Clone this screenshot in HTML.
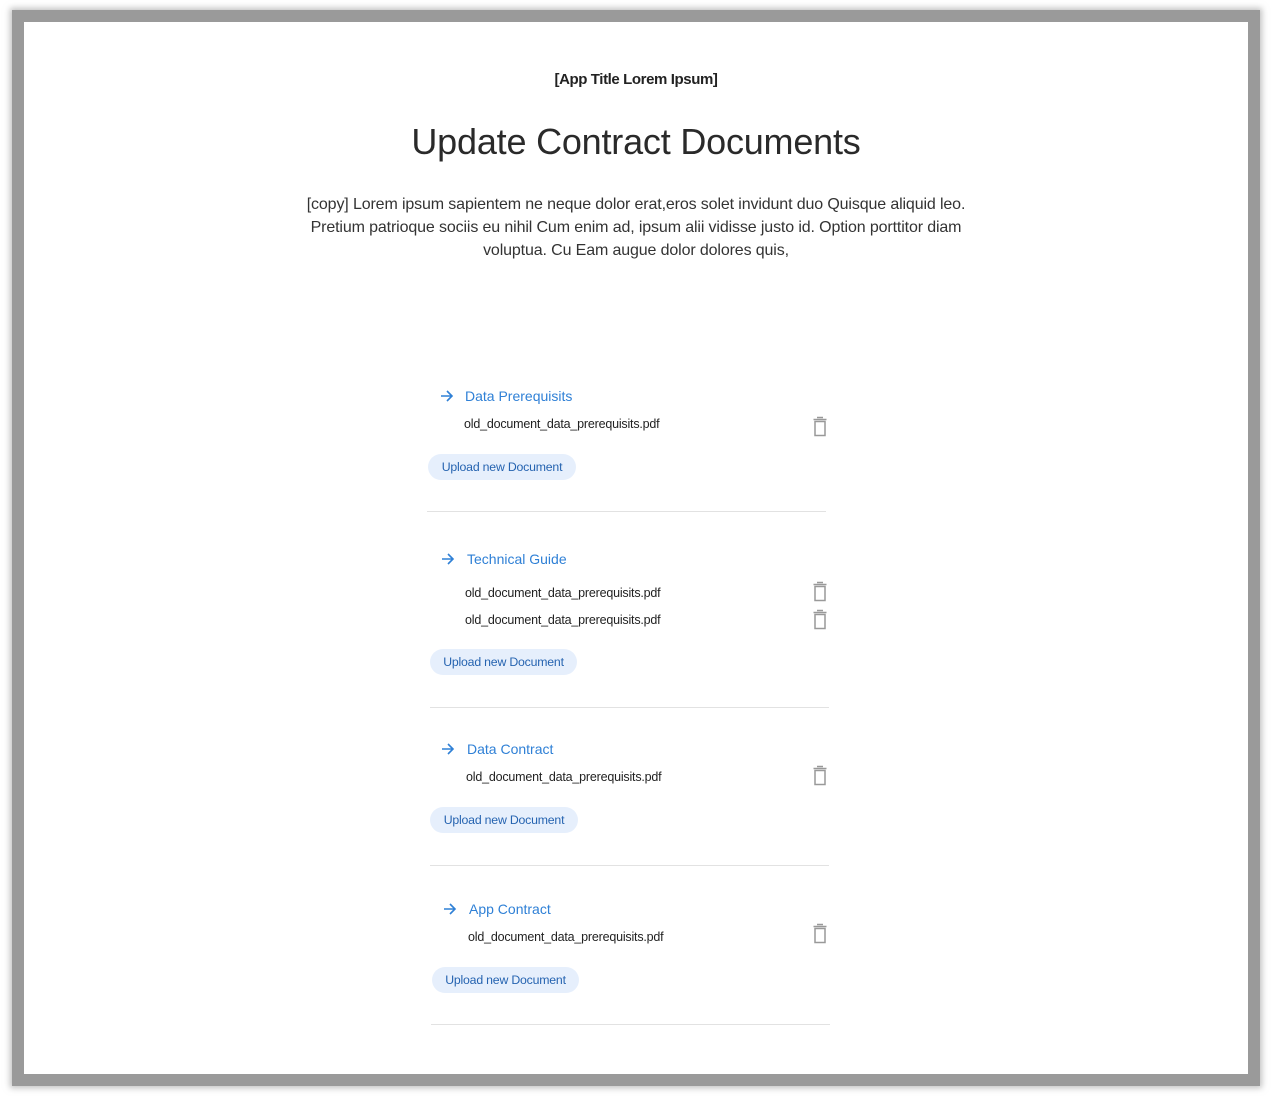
<!DOCTYPE html>
<html><head><meta charset="utf-8"><style>
html,body{margin:0;padding:0;background:#fff;}
body{width:1272px;height:1096px;position:relative;overflow:hidden;font-family:"Liberation Sans",sans-serif;}
.frame{position:absolute;left:12px;top:10px;box-sizing:border-box;width:1248px;height:1076px;border:12px solid #9a9a9a;box-shadow:0 0 6px 2px rgba(150,150,150,.6);}
.t{position:absolute;white-space:nowrap;}
.app{left:0;width:1272px;text-align:center;top:71px;font-size:15px;font-weight:bold;color:#222;letter-spacing:-0.4px;}
.h1{left:0;width:1272px;text-align:center;top:121px;font-size:36px;color:#2a2a2a;letter-spacing:-0.2px;font-weight:normal;}
.copy{left:236px;width:800px;text-align:center;top:193px;font-size:16px;line-height:23px;color:#333;letter-spacing:-0.13px;}
.ttl{font-size:14px;color:#2f80d6;}
.file{font-size:12.5px;color:#222;letter-spacing:-0.2px;}
.btn{position:absolute;height:26px;border-radius:13px;background:#e6effc;color:#2563b0;font-size:12.3px;line-height:26px;text-align:center;letter-spacing:-0.2px;}
.hr{position:absolute;height:1px;background:#e2e2e2;width:399px;}
svg{position:absolute;}
</style></head><body>
<div class="frame"></div>
<div class="t app">[App Title Lorem Ipsum]</div>
<div class="t h1">Update Contract Documents</div>
<div class="t copy">[copy] Lorem ipsum sapientem ne neque dolor erat,eros solet invidunt duo Quisque aliquid leo.<br>Pretium patrioque sociis eu nihil Cum enim ad, ipsum alii vidisse justo id. Option porttitor diam<br>voluptua. Cu Eam augue dolor dolores quis,</div>

<!-- section 1 -->
<svg style="left:440px;top:390px" width="14" height="12" viewBox="0 0 14 12"><path d="M1 6H12M7 1L12 6L7 11" fill="none" stroke="#2f80d6" stroke-width="1.6"/></svg>
<div class="t ttl" style="left:465px;top:388px">Data Prerequisits</div>
<div class="t file" style="left:464px;top:417px">old_document_data_prerequisits.pdf</div>
<svg style="left:812px;top:416px" width="16" height="21" viewBox="0 0 16 21"><path d="M5 1.5H11M1.5 3.5H14.5M3 5.5H13V19.5H3Z" fill="none" stroke="#999" stroke-width="1.5"/></svg>
<div class="btn" style="left:428px;top:454px;width:148px">Upload new Document</div>
<div class="hr" style="left:427px;top:511px"></div>

<!-- section 2 -->
<svg style="left:441px;top:553px" width="14" height="12" viewBox="0 0 14 12"><path d="M1 6H12M7 1L12 6L7 11" fill="none" stroke="#2f80d6" stroke-width="1.6"/></svg>
<div class="t ttl" style="left:467px;top:551px">Technical Guide</div>
<div class="t file" style="left:465px;top:586px">old_document_data_prerequisits.pdf</div>
<div class="t file" style="left:465px;top:613px">old_document_data_prerequisits.pdf</div>
<svg style="left:812px;top:581px" width="16" height="21" viewBox="0 0 16 21"><path d="M5 1.5H11M1.5 3.5H14.5M3 5.5H13V19.5H3Z" fill="none" stroke="#999" stroke-width="1.5"/></svg>
<svg style="left:812px;top:609px" width="16" height="21" viewBox="0 0 16 21"><path d="M5 1.5H11M1.5 3.5H14.5M3 5.5H13V19.5H3Z" fill="none" stroke="#999" stroke-width="1.5"/></svg>
<div class="btn" style="left:430px;top:649px;width:147px">Upload new Document</div>
<div class="hr" style="left:430px;top:707px"></div>

<!-- section 3 -->
<svg style="left:441px;top:743px" width="14" height="12" viewBox="0 0 14 12"><path d="M1 6H12M7 1L12 6L7 11" fill="none" stroke="#2f80d6" stroke-width="1.6"/></svg>
<div class="t ttl" style="left:467px;top:741px">Data Contract</div>
<div class="t file" style="left:466px;top:770px">old_document_data_prerequisits.pdf</div>
<svg style="left:812px;top:765px" width="16" height="21" viewBox="0 0 16 21"><path d="M5 1.5H11M1.5 3.5H14.5M3 5.5H13V19.5H3Z" fill="none" stroke="#999" stroke-width="1.5"/></svg>
<div class="btn" style="left:430px;top:807px;width:148px">Upload new Document</div>
<div class="hr" style="left:430px;top:865px"></div>

<!-- section 4 -->
<svg style="left:443px;top:903px" width="14" height="12" viewBox="0 0 14 12"><path d="M1 6H12M7 1L12 6L7 11" fill="none" stroke="#2f80d6" stroke-width="1.6"/></svg>
<div class="t ttl" style="left:469px;top:901px">App Contract</div>
<div class="t file" style="left:468px;top:930px">old_document_data_prerequisits.pdf</div>
<svg style="left:812px;top:923px" width="16" height="21" viewBox="0 0 16 21"><path d="M5 1.5H11M1.5 3.5H14.5M3 5.5H13V19.5H3Z" fill="none" stroke="#999" stroke-width="1.5"/></svg>
<div class="btn" style="left:432px;top:967px;width:147px">Upload new Document</div>
<div class="hr" style="left:431px;top:1024px"></div>
</body></html>
